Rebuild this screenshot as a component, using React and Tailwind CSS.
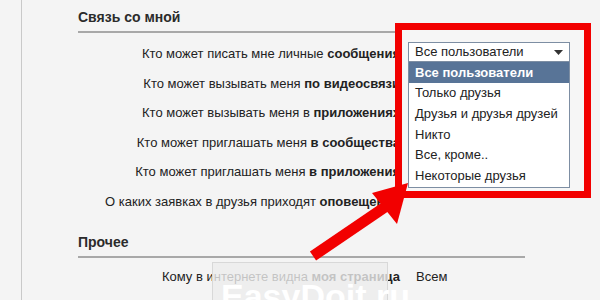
import React from 'react';

const rows = [
  { text: 'Кто может писать мне личные ', bold: 'сообщения', value: 'Все пользователи' },
  { text: 'Кто может вызывать меня ', bold: 'по видеосвязи', value: 'Только друзья' },
  { text: 'Кто может вызывать меня в ', bold: 'приложениях', value: 'Все пользователи' },
  { text: 'Кто может приглашать меня ', bold: 'в сообщества', value: 'Все пользователи' },
  { text: 'Кто может приглашать меня ', bold: 'в приложения', value: 'Все пользователи' },
  { text: 'О каких заявках в друзья приходят ', bold: 'оповещения', value: '' },
];

const options = [
  'Все пользователи',
  'Только друзья',
  'Друзья и друзья друзей',
  'Никто',
  'Все, кроме..',
  'Некоторые друзья',
];

const SettingRow = ({ row }) => (
  <div className="flex flex-row items-center h-[29.6px]">
    <div className="w-[322px] text-right whitespace-nowrap">
      {row.text}
      <span className="font-bold">{row.bold}</span>
    </div>
    <div className="pl-[16px] whitespace-nowrap">{row.value}</div>
  </div>
);

const Section = ({ title, className, children }) => (
  <div className={className}>
    <div className="w-[447px] border-b-2 border-[#a8a8a8] pb-[3px] text-[14px] font-bold text-[#2b2b2b]">
      {title}
    </div>
    {children}
  </div>
);

const Dropdown = () => (
  <div className="absolute left-[395px] top-[23px] w-[196px] h-[175px] overflow-hidden border-[7px] border-[#f20000] bg-[#f6f6f6]">
    <div className="absolute left-[6px] top-[12px] w-[162px]">
      <div className="flex flex-row items-center justify-between h-[20px] border border-[#7d8ea3] bg-white pl-[6px] pr-[6px]">
        <span>Все пользователи</span>
        <svg width="9" height="5" viewBox="0 0 9 5">
          <path d="M0 0h9L4.5 5z" fill="#333" />
        </svg>
      </div>
      <div className="border border-t-0 border-[#7d8ea3] bg-white pb-[1px]">
        {options.map((o, i) => (
          <div
            key={i}
            className={
              i === 0
                ? 'h-[20.7px] flex items-center pl-[6px] bg-[#587497] text-white font-bold'
                : 'h-[20.7px] flex items-center pl-[6px]'
            }
          >
            {o}
          </div>
        ))}
      </div>
      <div className="pl-[6px] pt-[1px] whitespace-nowrap">Среди пользователей</div>
    </div>
  </div>
);

const Arrow = () => (
  <svg className="absolute left-0 top-0" width="600" height="300" viewBox="0 0 600 300">
    <line x1="313" y1="256" x2="388" y2="205" stroke="#f20000" strokeWidth="11" />
    <polygon points="408,183 372,193 397,224" fill="#f20000" />
  </svg>
);

const App = () => {
  return (
    <div
      className="relative w-[600px] h-[300px] overflow-hidden bg-[#f4f4f4] text-[13px] text-[#222]"
      style={{ fontFamily: '"Liberation Sans", Arial, sans-serif' }}
    >
      <div className="ml-[21px] h-full border-l border-[#c9c9c9] pl-[56px]">
        <Section title="Связь со мной" className="pt-[7px]">
          <div className="pt-[6px]">
            {rows.map((r, i) => (
              <SettingRow key={i} row={r} />
            ))}
          </div>
        </Section>
        <Section title="Прочее" className="pt-[15px]">
          <div className="pt-[4px]">
            <SettingRow row={{ text: 'Кому в интернете видна ', bold: 'моя страница', value: 'Всем' }} />
          </div>
        </Section>
      </div>
      <Dropdown />
      <Arrow />
      <div className="absolute left-[212px] top-[262px] w-[176px] h-[44px] border border-[#d8d8d8] bg-[#ececec]/80 pl-[8px] pt-[16px] text-[34px] font-bold leading-none text-white">
        EasyDoit.ru
      </div>
    </div>
  );
};

export default App;
